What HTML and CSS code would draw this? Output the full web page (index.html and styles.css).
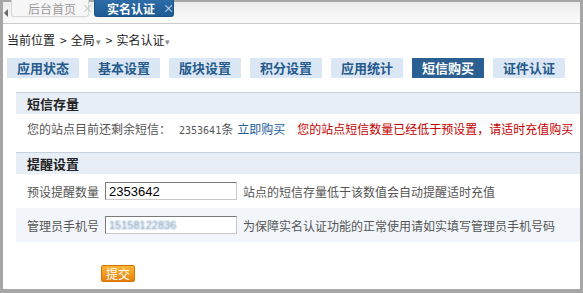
FILE: index.html
```html
<!DOCTYPE html>
<html lang="zh-CN">
<head>
    <meta charset="UTF-8">
    <title>实名认证 - 短信购买</title>
    <link rel="stylesheet" href="styles.css">
</head>
<body>
    <div class="frame">
        <div class="topbar">
            <span class="nav-arrow"></span>
            <a class="win-tab" href="#">后台首页<span class="close">×</span></a>
            <a class="win-tab active" href="#">实名认证<span class="close">×</span></a>
        </div>

        <div class="main">
            <div class="crumb">
                当前位置<span class="sep">&gt;</span>全局<span class="caret">▾</span><span class="sep">&gt;</span>实名认证<span class="caret">▾</span>
            </div>

            <ul class="tabs">
                <li><a href="#">应用状态</a></li>
                <li><a href="#">基本设置</a></li>
                <li><a href="#">版块设置</a></li>
                <li><a href="#">积分设置</a></li>
                <li><a href="#">应用统计</a></li>
                <li class="current"><a href="#">短信购买</a></li>
                <li><a href="#">证件认证</a></li>
            </ul>

            <div class="panel">
                <h3 class="panel-title">短信存量</h3>
                <div class="info-row">
                    您的站点目前还剩余短信：<span class="num">2353641</span>条<a class="buy" href="#">立即购买</a><span class="warn">您的站点短信数量已经低于预设置，请适时充值购买</span>
                </div>
            </div>

            <form class="panel">
                <h3 class="panel-title">提醒设置</h3>
                <div class="field">
                    <label for="remind">预设提醒数量</label>
                    <input type="text" id="remind" value="2353642">
                    <span class="hint">站点的短信存量低于该数值会自动提醒适时充值</span>
                </div>
                <div class="field alt">
                    <label for="mobile">管理员手机号</label>
                    <input type="text" id="mobile" class="masked" value="15158122836">
                    <span class="hint">为保障实名认证功能的正常使用请如实填写管理员手机号码</span>
                </div>
                <div class="actions">
                    <button type="submit" class="submit-btn">提交</button>
                </div>
            </form>
        </div>
    </div>
</body>
</html>
```

FILE: styles.css
```css
* {
    margin: 0;
    padding: 0;
    box-sizing: border-box;
}

body {
    font-family: "Noto Sans CJK SC", "Liberation Sans", sans-serif;
    font-size: 12px;
    color: #444;
    background: #fff;
}

a {
    text-decoration: none;
}

.frame {
    width: 583px;
    height: 293px;
    border-left: 3px solid #a6a6a6;
    border-right: 3px solid #a6a6a6;
    border-bottom: 4px solid #a6a6a6;
    overflow: hidden;
}

/* window tabs */
.topbar {
    height: 24px;
    border-top: 2px solid #a6a6a6;
    border-bottom: 1px solid #cbcbcb;
    background: linear-gradient(#ececec, #fbfbfb);
    display: flex;
    align-items: flex-start;
    padding-left: 1px;
}

.nav-arrow {
    width: 0;
    height: 0;
    margin-top: 7px;
    border-top: 4px solid transparent;
    border-bottom: 4px solid transparent;
    border-right: 4px solid #666;
}

.win-tab {
    width: 78px;
    height: 17px;
    margin-top: -2px;
    margin-left: 3px;
    padding-left: 16px;
    display: flex;
    align-items: center;
    white-space: nowrap;
    font-size: 12px;
    color: #9a9a9a;
    border: 1px solid #d6d6d6;
    border-top: 0;
    border-radius: 0 0 3px 3px;
    background: #f7f7f7;
}

.win-tab + .win-tab {
    margin-left: 5px;
}

.win-tab.active {
    width: 80px;
    padding-left: 12px;
    color: #fff;
    font-weight: bold;
    background: linear-gradient(#2d6ca8, #1f5b93);
    border-color: #1c5288;
}

.close {
    font-size: 11px;
    font-weight: normal;
    margin-left: 6px;
    color: #c4c4c4;
}

.active .close {
    margin-left: 8px;
    color: #d8e6f5;
}

.main {
    padding-left: 4px;
}

.crumb {
    margin-top: 6px;
    height: 20px;
    line-height: 20px;
    font-size: 12px;
    color: #222;
}

.sep {
    margin: 0 4px 0 5px;
}

.caret {
    font-size: 9px;
    color: #888;
    margin-left: 1px;
}

/* section tabs */
.tabs {
    list-style: none;
    display: flex;
    gap: 9px;
    margin-top: 8px;
}

.tabs a {
    display: block;
    height: 20px;
    line-height: 20px;
    padding: 0 10px;
    font-size: 13px;
    font-weight: bold;
    color: #265a8c;
    background: #dbe7f4;
}

.tabs .current a {
    color: #fff;
    background: #2b5f92;
}

/* panels */
.panel {
    margin-left: 9px;
}

.tabs + .panel {
    margin-top: 14px;
}

.panel + .panel {
    margin-top: 8px;
}

.panel-title {
    height: 22px;
    line-height: 21px;
    padding-left: 11px;
    font-size: 13px;
    color: #222;
    background: #e8eef6;
    border-top: 1px solid #c6d1de;
}

.info-row {
    height: 30px;
    line-height: 30px;
    padding-left: 11px;
    color: #555;
    white-space: nowrap;
}

.num {
    font-family: "DejaVu Sans Mono", monospace;
    font-size: 10px;
    margin-left: 8px;
}

.buy {
    color: #1d5c9b;
    margin-left: 4px;
}

.warn {
    color: #c40000;
    margin-left: 12px;
}

.field {
    height: 34px;
    display: flex;
    align-items: center;
    padding-left: 11px;
    color: #555;
    white-space: nowrap;
}

.field.alt {
    background: #f2f5fa;
}

.field label {
    width: 78px;
}

.field input {
    width: 132px;
    height: 18px;
    padding: 0 3px;
    font-family: "Liberation Sans", sans-serif;
    font-size: 13px;
    color: #000;
    background: #fff;
    border: 1px solid #c9c9c9;
    border-top-color: #7a7a7a;
    border-left-color: #7a7a7a;
    outline: none;
}

.field input.masked {
    color: transparent;
    text-shadow: 0 0 2px #6088b2;
    font-size: 11px;
}

.hint {
    margin-left: 6px;
}

.actions {
    padding: 23px 0 0 85px;
}

.submit-btn {
    width: 34px;
    height: 17px;
    font-family: "Noto Sans CJK SC", sans-serif;
    font-size: 12px;
    line-height: 15px;
    color: #fff;
    background: linear-gradient(#fbb437, #e7800a);
    border: 1px solid #d27400;
    border-radius: 2px;
    cursor: pointer;
}
```
